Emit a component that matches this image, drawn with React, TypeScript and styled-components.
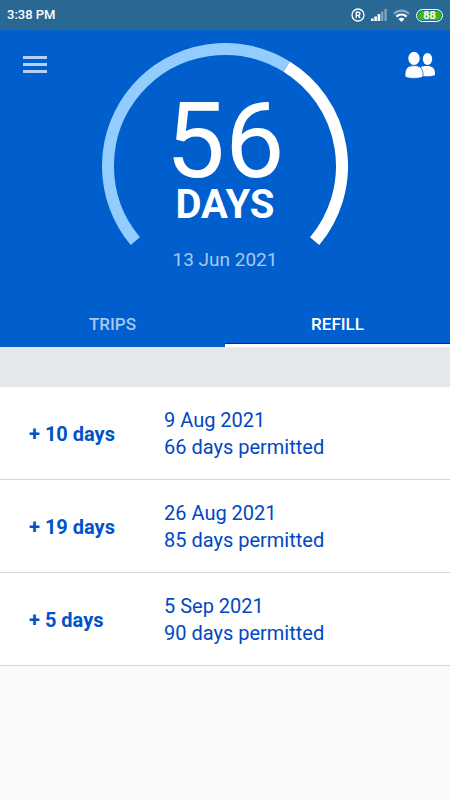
import React from "react";
import styled, { createGlobalStyle } from "styled-components";

const GlobalStyle = createGlobalStyle`
  * { box-sizing: border-box; }
  body {
    margin: 0;
    background: #fafafa;
    font-family: Roboto, "Liberation Sans", sans-serif;
  }
`;

const StatusBar = styled.div`
  display: flex;
  align-items: center;
  justify-content: space-between;
  height: 30px;
  padding: 0 7px;
  background: #296893;
  color: #ffffff;
  font-size: 13px;
  font-weight: 500;
  line-height: 16px;
`;

const StatusIcons = styled.div`
  display: flex;
  align-items: center;
  gap: 6px;

  svg { display: block; }
`;

const Battery = styled.span`
  display: flex;
  align-items: center;
  justify-content: center;
  width: 27px;
  height: 13px;
  border: 1px solid #ffffff;
  border-radius: 7px;
  background: #3cb814;
  box-shadow: inset 0 0 0 1px #296893;
  font-size: 11px;
  font-weight: 700;
  line-height: 13px;
`;

const Header = styled.header`
  background: #005fcc;
  color: #ffffff;
`;

const Summary = styled.div`
  display: grid;
  grid-template-columns: 1fr auto 1fr;
  align-items: start;
  padding-top: 13px;
`;

const IconButton = styled.button<{ $end?: boolean }>`
  justify-self: ${(p) => (p.$end ? "end" : "start")};
  margin: ${(p) => (p.$end ? "8px 14px 0 0" : "12px 0 0 22px")};
  padding: 0;
  border: 0;
  background: none;
  color: inherit;
  cursor: pointer;

  svg { display: block; }
`;

const Gauge = styled.div`
  display: grid;
  justify-items: center;

  > * { grid-area: 1 / 1; }
`;

const Reading = styled.div`
  display: flex;
  flex-direction: column;
  align-items: center;
  padding-top: 50px;
`;

const Amount = styled.span`
  font-size: 106px;
  line-height: 96px;
`;

const Unit = styled.span`
  font-size: 40px;
  font-weight: 700;
  line-height: 32px;
`;

const CurrentDate = styled.p`
  margin: 2px 0 0;
  color: #a6c9ef;
  font-size: 19px;
  line-height: 24px;
  text-align: center;
`;

const Tabs = styled.div`
  display: grid;
  grid-template-columns: 1fr 1fr;
  margin-top: 28px;
`;

const Tab = styled.button<{ $active?: boolean }>`
  height: 47px;
  padding: 3px 0 0;
  border: 0;
  border-bottom: 3px solid ${(p) => (p.$active ? "#ffffff" : "transparent")};
  background: none;
  color: ${(p) => (p.$active ? "#ffffff" : "#a6c9ef")};
  box-shadow: ${(p) => (p.$active ? "inset 0 -1px #0022cc" : "none")};
  font: 500 17px/20px Roboto, "Liberation Sans", sans-serif;
  cursor: pointer;
`;

const Band = styled.div`
  height: 40px;
  background: #e4e8eb;
`;

const RefillList = styled.ul`
  margin: 0;
  padding: 0;
  list-style: none;
`;

const RefillRow = styled.li`
  display: grid;
  grid-template-columns: 135px 1fr;
  align-items: center;
  padding: 20px 29px 18px;
  border-bottom: 1px solid #d6d6d6;
  background: #ffffff;
  color: #0048c4;
  font-size: 20px;
  line-height: 27px;
`;

const Gain = styled.strong`
  color: #0053c8;
  font-weight: 700;
`;

const Detail = styled.div`
  display: flex;
  flex-direction: column;
`;

const CENTER = 123;
const RADIUS = 117;
const START = 220;
const SWEEP = 260;

function point(angle: number) {
  const a = (angle * Math.PI) / 180;
  return `${(CENTER + RADIUS * Math.cos(a)).toFixed(2)} ${(CENTER - RADIUS * Math.sin(a)).toFixed(2)}`;
}

function arc(from: number, to: number) {
  const large = from - to > 180 ? 1 : 0;
  return `M${point(from)} A${RADIUS} ${RADIUS} 0 ${large} 1 ${point(to)}`;
}

const available = 56;
const allowance = 90;

const refills = [
  { gain: 10, date: "9 Aug 2021", permitted: 66 },
  { gain: 19, date: "26 Aug 2021", permitted: 85 },
  { gain: 5, date: "5 Sep 2021", permitted: 90 },
];

function GaugeArc() {
  const split = START - (SWEEP * available) / allowance;
  return (
    <svg width="246" height="203" viewBox="0 0 246 203" fill="none" strokeWidth="12" aria-hidden="true">
      <path d={arc(split, START - SWEEP)} stroke="#ffffff" />
      <path d={arc(START, split)} stroke="#93ccff" />
    </svg>
  );
}

function RegisteredIcon() {
  return (
    <svg width="14" height="14" viewBox="0 0 14 14" fill="none" stroke="#ffffff" aria-hidden="true">
      <circle cx="7" cy="7" r="6" strokeWidth="1.3" />
      <path d="M5.3 10V4.2h2a1.6 1.6 0 0 1 0 3.2h-2M7.3 7.4 9 10" strokeWidth="1.4" />
    </svg>
  );
}

function SignalIcon() {
  return (
    <svg width="16" height="12" viewBox="0 0 16 12" fill="#ffffff" aria-hidden="true">
      <path d="M0 9.5h2.6V12H0zM3.300 7.500h2.600v4.500H3.300zM6.600 5h2.600v7H6.600z" />
      <path d="M10 2.500h2.400v9.500H10zM13.400 0h2.400v12h-2.400z" opacity="0.400" />
    </svg>
  );
}

function WifiIcon() {
  return (
    <svg width="17" height="13" viewBox="0 0 17 13" fill="none" stroke="#ffffff" strokeWidth="2.200" aria-hidden="true">
      <path d="M1 4.8a10.6 10.6 0 0 1 15 0" opacity="0.45" />
      <path d="M3.4 7.600a7.200 7.200 0 0 1 10.200 0" />
      <path d="M8.5 13 5.500 10a4.200 4.200 0 0 1 6 0z" fill="#ffffff" stroke="none" />
    </svg>
  );
}

function MenuIcon() {
  return (
    <svg width="26" height="20" viewBox="0 0 26 20" fill="#b4cff1" aria-hidden="true">
      <path d="M1 1h24v3H1zM1 8h24v3H1zM1 15h24v3H1z" />
    </svg>
  );
}

function PeopleIcon() {
  return (
    <svg width="31" height="28" viewBox="0 0 31 28" fill="#ffffff" aria-hidden="true">
      <ellipse cx="22.500" cy="8" rx="4.700" ry="6" />
      <path d="M16 25.300V15.900c1.500-.8 3.300-1 5.800-1 5.800 0 8.200 2.600 8.200 7.700V24c-1.800 1-4 1.300-8 1.300z" />
      <path
        d="M9 14.600c-6.200 0-9 2.600-9 9.200v1.900c2 1.300 5 1.700 9 1.700s7-.4 9-1.700v-1.900c0-6.600-2.800-9.200-9-9.200z"
        stroke="#005fcc"
        strokeWidth="0.800"
      />
      <ellipse cx="9" cy="7.400" rx="5.700" ry="6.600" />
    </svg>
  );
}

export default function App() {
  return (
    <>
      <GlobalStyle />
      <StatusBar>
        <span>3:38 PM</span>
        <StatusIcons>
          <RegisteredIcon />
          <SignalIcon />
          <WifiIcon />
          <Battery>88</Battery>
        </StatusIcons>
      </StatusBar>
      <Header>
        <Summary>
          <IconButton type="button" aria-label="Menu">
            <MenuIcon />
          </IconButton>
          <Gauge>
            <GaugeArc />
            <Reading>
              <Amount>{available}</Amount>
              <Unit>DAYS</Unit>
            </Reading>
          </Gauge>
          <IconButton type="button" aria-label="People" $end>
            <PeopleIcon />
          </IconButton>
        </Summary>
        <CurrentDate>13 Jun 2021</CurrentDate>
        <Tabs role="tablist">
          <Tab type="button" role="tab" aria-selected="false">TRIPS</Tab>
          <Tab type="button" role="tab" aria-selected="true" $active>REFILL</Tab>
        </Tabs>
      </Header>
      <main>
        <Band />
        <RefillList>
          {refills.map((r) => (
            <RefillRow key={r.date}>
              <Gain>+ {r.gain} days</Gain>
              <Detail>
                <span>{r.date}</span>
                <span>{r.permitted} days permitted</span>
              </Detail>
            </RefillRow>
          ))}
        </RefillList>
      </main>
    </>
  );
}
